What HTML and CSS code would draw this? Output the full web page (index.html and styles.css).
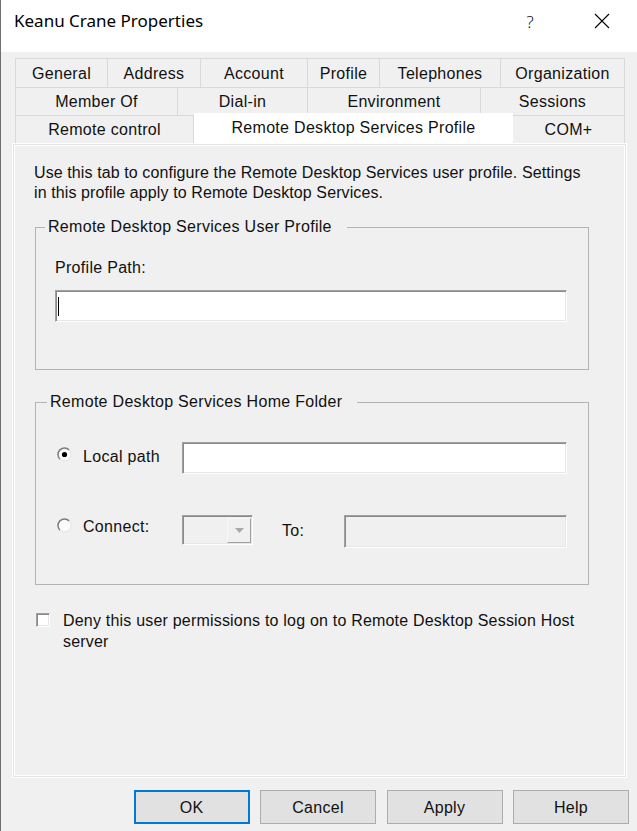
FILE: index.html
```html
<!DOCTYPE html>
<html>
<head>
<meta charset="utf-8">
<link rel="stylesheet" href="styles.css">
</head>
<body>
<div class="window">
  <div class="titlebar">
    <span class="title">Keanu Crane Properties</span>
    <span class="tb-btn help">?</span>
    <span class="tb-btn close"><svg width="16" height="16" viewBox="0 0 16 16"><path d="M1 1L15 15M15 1L1 15" stroke="#000" stroke-width="1.1" fill="none"/></svg></span>
  </div>

  <div class="tabs">
    <div class="row r1">
      <div class="tab">General</div>
      <div class="tab">Address</div>
      <div class="tab">Account</div>
      <div class="tab">Profile</div>
      <div class="tab">Telephones</div>
      <div class="tab">Organization</div>
    </div>
    <div class="row r2">
      <div class="tab">Member Of</div>
      <div class="tab">Dial-in</div>
      <div class="tab">Environment</div>
      <div class="tab">Sessions</div>
    </div>
    <div class="row r3">
      <div class="tab">Remote control</div>
      <div class="tab sel">Remote Desktop Services Profile</div>
      <div class="tab">COM+</div>
    </div>
  </div>

  <div class="panel">
    <p class="desc">Use this tab to configure the Remote Desktop Services user profile. Settings in this profile apply to Remote Desktop Services.</p>

    <fieldset class="group g1">
      <legend>Remote Desktop Services User Profile</legend>
      <div class="label">Profile Path:</div>
      <div class="textbox tb-profile"><span class="caret"></span></div>
    </fieldset>

    <fieldset class="group g2">
      <legend>Remote Desktop Services Home Folder</legend>
      <div class="opt opt1">
        <svg class="radio" width="15" height="15" viewBox="0 0 15 15">
          <circle cx="7.5" cy="7.5" r="6.5" fill="#fbfbfb"/>
          <path d="M2.9 12.1A6.5 6.5 0 0 1 12.1 2.9" fill="none" stroke="#7d7d7d" stroke-width="1.5"/>
          <path d="M12.1 2.9A6.5 6.5 0 0 1 2.9 12.1" fill="none" stroke="#e4e4e4" stroke-width="1"/>
          <circle cx="7.5" cy="7.5" r="2.6" fill="#000"/>
        </svg>
        <span class="optlabel">Local path</span>
        <div class="textbox grow"></div>
      </div>
      <div class="opt opt2">
        <svg class="radio" width="15" height="15" viewBox="0 0 15 15">
          <circle cx="7.5" cy="7.5" r="6.5" fill="#fbfbfb"/>
          <path d="M2.9 12.1A6.5 6.5 0 0 1 12.1 2.9" fill="none" stroke="#7d7d7d" stroke-width="1.5"/>
          <path d="M12.1 2.9A6.5 6.5 0 0 1 2.9 12.1" fill="none" stroke="#e4e4e4" stroke-width="1"/>
        </svg>
        <span class="optlabel">Connect:</span>
        <div class="combo">
          <span class="combo-field"></span>
          <span class="combo-btn"><svg width="9" height="5" viewBox="0 0 9 5"><path d="M0 0H9L4.5 5Z" fill="#a8a8a8"/></svg></span>
        </div>
        <span class="tolabel">To:</span>
        <div class="textbox disabled grow tall"></div>
      </div>
    </fieldset>

    <div class="check">
      <span class="box"></span>
      <span class="checktext">Deny this user permissions to log on to Remote Desktop Session Host server</span>
    </div>
  </div>

  <div class="buttons">
    <div class="btn default">OK</div>
    <div class="btn">Cancel</div>
    <div class="btn">Apply</div>
    <div class="btn">Help</div>
  </div>
</div>
</body>
</html>
```

FILE: styles.css
```css
* { box-sizing: border-box; }

html, body {
  margin: 0;
  padding: 0;
  background: #f0f0f0;
}

body {
  font-family: "Liberation Sans", Arial, sans-serif;
  font-size: 16px;
  letter-spacing: 0.3px;
  color: #111;
}

.window {
  width: 637px;
  height: 831px;
  background: #f0f0f0;
  border-left: 1px solid #707070;
  overflow: hidden;
}

/* title bar */
.titlebar {
  height: 52px;
  background: #fff;
  display: flex;
  align-items: flex-start;
  padding: 9px 12px 0 13px;
  gap: 28px;
}

.title {
  flex: 1;
  font-family: "Noto Sans", "Open Sans", sans-serif;
  font-size: 17px;
  line-height: 24px;
  letter-spacing: 0;
  color: #000;
}

.tb-btn {
  width: 46px;
  height: 24px;
  display: flex;
  justify-content: center;
  align-items: center;
}

.help {
  font-family: "Noto Sans", sans-serif;
  font-size: 17px;
  font-weight: 300;
  letter-spacing: 0;
  padding-left: 4px;
}

/* tabs */
.tabs {
  margin: 6px 0 0 14px;
  width: 609px;
}

.row {
  display: grid;
  border-left: 1px solid #d9d9d9;
}

.r1 { height: 29px; grid-template-columns: 92px 93px 107px 72px 121px 124px; }
.r2 { height: 28px; grid-template-columns: 162px 130px 173px 144px; }
.r3 { height: 28px; grid-template-columns: 178px 319px 112px; }

.tab {
  display: flex;
  align-items: center;
  justify-content: center;
  border-top: 1px solid #d9d9d9;
  border-right: 1px solid #d9d9d9;
  background: #f0f0f0;
  white-space: nowrap;
  padding-top: 1px;
}

.tab.sel {
  background: #fff;
  border: none;
  margin-top: -2px;
  height: 30px;
  padding: 0 0 1px;
}

/* panel */
.panel {
  margin-left: 11px;
  width: 615px;
  height: 635px;
  border: 1px solid #fff;
  box-shadow: inset 0 0 0 1px #e4e4e4, inset 0 0 0 2px #fff;
  padding: 19px 37px 0 21px;
}

.desc {
  margin: 0;
  line-height: 20px;
  letter-spacing: 0.1px;
}

.group {
  margin: 0 0 0 1px;
  border: 1px solid #b3b3b3;
  min-inline-size: 0;
}

.group legend {
  line-height: 20px;
  padding: 0 15px 0 3px;
  margin-left: -10px;
}

.g1 {
  margin-top: 14px;
  padding: 21px 21px 47px 19px;
}

.label {
  line-height: 20px;
}

.textbox {
  height: 32px;
  background: #fff;
  border: 1px solid;
  border-color: #a0a0a0 #fff #fff #a0a0a0;
  box-shadow: inset 1px 1px 0 #8a8a8a, inset -1px -1px 0 #e6e6e6;
  display: flex;
  align-items: center;
  padding-left: 2px;
}

.tb-profile {
  margin-top: 12px;
}

.caret {
  width: 1px;
  height: 19px;
  background: #000;
}

.g2 {
  margin-top: 22px;
  padding: 30px 21px 36px 21px;
}

.opt {
  display: flex;
}

.opt1 {
  align-items: center;
}

.opt2 {
  margin-top: 41px;
  align-items: flex-start;
}

.radio {
  flex: none;
  margin-right: 11px;
}

.opt1 .radio { margin-top: -7px; }
.opt2 .radio { margin-top: 3px; }

.optlabel {
  width: 99px;
  line-height: 20px;
  flex: none;
}

.opt1 .optlabel { margin-top: -3px; }
.opt2 .optlabel { margin-top: 2px; }

.grow { flex: 1; }

.textbox.disabled {
  background: #f0f0f0;
}

.textbox.tall { height: 33px; }

.combo {
  width: 71px;
  height: 30px;
  flex: none;
  display: flex;
  border: 1px solid;
  border-color: #a0a0a0 #fff #fff #a0a0a0;
  box-shadow: inset 1px 1px 0 #8a8a8a, inset -1px -1px 0 #e6e6e6;
  background: #f0f0f0;
  padding: 2px 1px 1px 2px;
}

.combo-field { flex: 1; }

.combo-btn {
  width: 24px;
  display: flex;
  align-items: center;
  justify-content: center;
  border: 1px solid;
  border-color: #f7f7f7 #a0a0a0 #a0a0a0 #f7f7f7;
  background: #f0f0f0;
}

.tolabel {
  width: 62px;
  margin-left: 29px;
  margin-top: 6px;
  line-height: 20px;
  flex: none;
}

/* checkbox */
.check {
  margin-top: 25px;
  display: flex;
  align-items: flex-start;
}

.box {
  flex: none;
  width: 14px;
  height: 14px;
  margin: 3px 13px 0 2px;
  background: #fff;
  border: 1px solid;
  border-color: #a0a0a0 #fff #fff #a0a0a0;
  box-shadow: inset 1px 1px 0 #8a8a8a, inset -1px -1px 0 #e6e6e6;
}

.checktext {
  line-height: 21px;
  letter-spacing: 0.2px;
}

/* buttons */
.buttons {
  margin-top: 12px;
  display: flex;
  justify-content: flex-end;
  gap: 10.5px;
  padding-right: 8px;
}

.btn {
  width: 116px;
  height: 34px;
  background: #e1e1e1;
  border: 1px solid #adadad;
  display: flex;
  align-items: center;
  justify-content: center;
  padding-top: 1px;
}

.btn.default {
  border: 1px solid #0078d7;
  box-shadow: inset 0 0 0 1px #0078d7;
}
```
